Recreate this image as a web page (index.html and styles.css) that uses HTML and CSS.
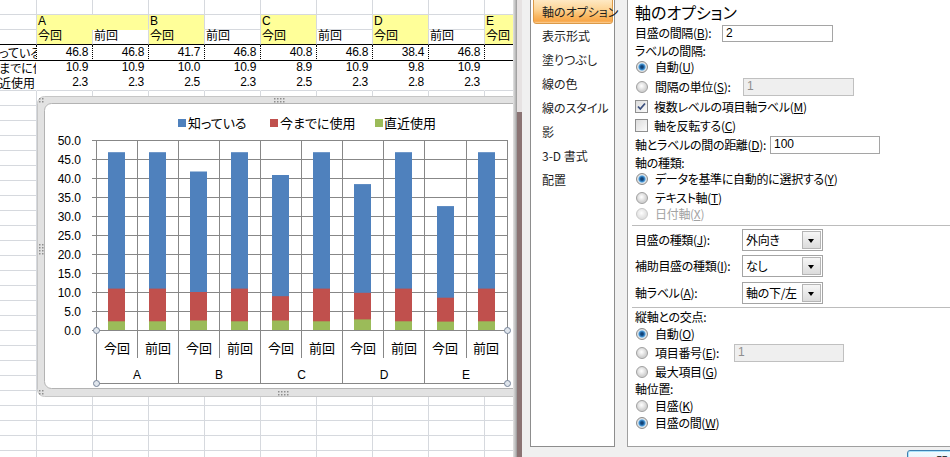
FILE: index.html
```html
<!DOCTYPE html>
<html lang="ja">
<head>
<meta charset="utf-8">
<title>軸の書式設定</title>
<link rel="stylesheet" href="styles.css">
</head>
<body>
<div class="sheet">
  <div class="grid">
    <!-- row 1 -->
    <div class="c"></div><div class="c"></div><div class="c"></div><div class="c"></div><div class="c"></div>
    <div class="c"></div><div class="c"></div><div class="c"></div><div class="c"></div><div class="c"></div>
    <!-- row 2 -->
    <div class="c"></div>
    <div class="c y span2 ny">A</div>
    <div class="c y ny">B</div><div class="c"></div>
    <div class="c y ny">C</div><div class="c"></div>
    <div class="c y ny">D</div><div class="c"></div>
    <div class="c y ny">E</div>
    <!-- row 3 -->
    <div class="c hb"></div>
    <div class="c y hb">今回</div><div class="c hb">前回</div>
    <div class="c y hb">今回</div><div class="c hb">前回</div>
    <div class="c y hb">今回</div><div class="c hb">前回</div>
    <div class="c y hb">今回</div><div class="c hb">前回</div>
    <div class="c y hb">今回</div>
    <!-- row 4 -->
    <div class="c lab dot"><span class="lt">知っている</span></div>
    <div class="c num dot">46.8</div><div class="c num dot">46.8</div>
    <div class="c num dot">41.7</div><div class="c num dot">46.8</div>
    <div class="c num dot">40.8</div><div class="c num dot">46.8</div>
    <div class="c num dot">38.4</div><div class="c num dot">46.8</div>
    <div class="c num dot">32.6</div>
    <!-- row 5 -->
    <div class="c lab pl"><span class="lt">今までに使用</span></div>
    <div class="c num pl">10.9</div><div class="c num pl">10.9</div>
    <div class="c num pl">10.0</div><div class="c num pl">10.9</div>
    <div class="c num pl">8.9</div><div class="c num pl">10.9</div>
    <div class="c num pl">9.8</div><div class="c num pl">10.9</div>
    <div class="c num pl">8.5</div>
    <!-- row 6 -->
    <div class="c lab pl gb"><span class="lt">直近使用</span></div>
    <div class="c num pl gb">2.3</div><div class="c num pl gb">2.3</div>
    <div class="c num pl gb">2.5</div><div class="c num pl gb">2.3</div>
    <div class="c num pl gb">2.5</div><div class="c num pl gb">2.3</div>
    <div class="c num pl gb">2.8</div><div class="c num pl gb">2.3</div>
    <div class="c num pl gb">2.2</div>
    <!-- blank rows -->
    <div class="f"></div><div class="f"></div><div class="f"></div><div class="f"></div><div class="f"></div>
    <div class="f"></div><div class="f"></div><div class="f"></div><div class="f"></div><div class="f"></div>
  </div>

  <div class="chart">
    <svg width="490" height="302" viewBox="0 0 490 302" xmlns="http://www.w3.org/2000/svg">
      <!-- selection frame -->
      <rect x="0.5" y="0.5" width="489" height="300" rx="7" fill="#e2e2e2" stroke="#c6c6c6"/>
      <rect x="7.5" y="7.5" width="476" height="285" rx="7" fill="#ffffff" stroke="#b3b3b3"/>
      <g fill="#8e8e8e">
        <rect x="2" y="2" width="1.5" height="1.5"/><rect x="5" y="2" width="1.5" height="1.5"/>
        <rect x="2" y="5" width="1.5" height="1.5"/><rect x="5" y="5" width="1.5" height="1.5"/>
        <rect x="2" y="294" width="1.5" height="1.5"/><rect x="5" y="294" width="1.5" height="1.5"/>
        <rect x="2" y="297" width="1.5" height="1.5"/><rect x="5" y="297" width="1.5" height="1.5"/>
        <rect x="2" y="148" width="1.5" height="1.5"/><rect x="5" y="148" width="1.5" height="1.5"/>
        <rect x="2" y="151" width="1.5" height="1.5"/><rect x="5" y="151" width="1.5" height="1.5"/>
        <rect x="2" y="154" width="1.5" height="1.5"/><rect x="5" y="154" width="1.5" height="1.5"/>
        <rect x="2" y="157" width="1.5" height="1.5"/><rect x="5" y="157" width="1.5" height="1.5"/>
        <rect x="237" y="2" width="1.5" height="1.5"/><rect x="240" y="2" width="1.5" height="1.5"/>
        <rect x="243" y="2" width="1.5" height="1.5"/><rect x="246" y="2" width="1.5" height="1.5"/>
        <rect x="237" y="5" width="1.5" height="1.5"/><rect x="240" y="5" width="1.5" height="1.5"/>
        <rect x="243" y="5" width="1.5" height="1.5"/><rect x="246" y="5" width="1.5" height="1.5"/>
        <rect x="241" y="295" width="1.5" height="1.5"/><rect x="244" y="295" width="1.5" height="1.5"/>
        <rect x="247" y="295" width="1.5" height="1.5"/><rect x="250" y="295" width="1.5" height="1.5"/>
        <rect x="241" y="298" width="1.5" height="1.5"/><rect x="244" y="298" width="1.5" height="1.5"/>
        <rect x="247" y="298" width="1.5" height="1.5"/><rect x="250" y="298" width="1.5" height="1.5"/>
      </g>

      <!-- legend -->
      <rect x="141" y="23" width="8" height="8" fill="#4f81bd"/>
      <text class="leg" x="151" y="26">知っている</text>
      <rect x="233" y="23" width="8" height="8" fill="#c0504d"/>
      <text class="leg" x="243" y="26">今までに使用</text>
      <rect x="338" y="23" width="8" height="8" fill="#9bbb59"/>
      <text class="leg" x="347" y="26">直近使用</text>

      <!-- gridlines -->
      <path fill="none" stroke="#878787" stroke-width="1"
        d="M55 44.5H471M55 63.5H471M55 82.5H471M55 101.5H471M55 120.5H471M55 139.5H471M55 158.5H471M55 177.5H471M55 196.5H471M55 215.5H471M55 234.5H471
           M59.5 44V288M100.5 44V262M141.5 44V288M182.5 44V262M223.5 44V288M264.5 44V262M305.5 44V288M346.5 44V262M387.5 44V288M429.5 44V262M470.5 44V288
           M59 287.5H471"/>

      <!-- bars -->
      <g fill="#4f81bd">
        <rect x="71" y="56.2" width="17" height="177.8"/>
        <rect x="112" y="56.2" width="17" height="177.8"/>
        <rect x="153" y="75.5" width="17" height="158.5"/>
        <rect x="194" y="56.2" width="17" height="177.8"/>
        <rect x="235" y="79" width="17" height="155"/>
        <rect x="276" y="56.2" width="17" height="177.8"/>
        <rect x="317" y="88.1" width="17" height="145.9"/>
        <rect x="358" y="56.2" width="17" height="177.8"/>
        <rect x="400" y="110.1" width="17" height="123.9"/>
        <rect x="441" y="56.2" width="17" height="177.8"/>
      </g>
      <g fill="#c0504d">
        <rect x="71" y="192.6" width="17" height="41.4"/>
        <rect x="112" y="192.6" width="17" height="41.4"/>
        <rect x="153" y="196" width="17" height="38"/>
        <rect x="194" y="192.6" width="17" height="41.4"/>
        <rect x="235" y="200.2" width="17" height="33.8"/>
        <rect x="276" y="192.6" width="17" height="41.4"/>
        <rect x="317" y="196.8" width="17" height="37.2"/>
        <rect x="358" y="192.6" width="17" height="41.4"/>
        <rect x="400" y="201.7" width="17" height="32.3"/>
        <rect x="441" y="192.6" width="17" height="41.4"/>
      </g>
      <g fill="#9bbb59">
        <rect x="71" y="225.3" width="17" height="8.7"/>
        <rect x="112" y="225.3" width="17" height="8.7"/>
        <rect x="153" y="224.5" width="17" height="9.5"/>
        <rect x="194" y="225.3" width="17" height="8.7"/>
        <rect x="235" y="224.5" width="17" height="9.5"/>
        <rect x="276" y="225.3" width="17" height="8.7"/>
        <rect x="317" y="223.4" width="17" height="10.6"/>
        <rect x="358" y="225.3" width="17" height="8.7"/>
        <rect x="400" y="225.6" width="17" height="8.4"/>
        <rect x="441" y="225.3" width="17" height="8.7"/>
      </g>

      <!-- value axis labels -->
      <g class="ylab">
        <text x="44" y="44.5">50.0</text>
        <text x="44" y="63.5">45.0</text>
        <text x="44" y="82.5">40.0</text>
        <text x="44" y="101.5">35.0</text>
        <text x="44" y="120.5">30.0</text>
        <text x="44" y="139.5">25.0</text>
        <text x="44" y="158.5">20.0</text>
        <text x="44" y="177.5">15.0</text>
        <text x="44" y="196.5">10.0</text>
        <text x="44" y="215.5">5.0</text>
        <text x="44" y="234.5">0.0</text>
      </g>

      <!-- category labels -->
      <g class="cat">
        <text x="80" y="251">今回</text>
        <text x="121" y="251">前回</text>
        <text x="162" y="251">今回</text>
        <text x="203" y="251">前回</text>
        <text x="244" y="251">今回</text>
        <text x="285" y="251">前回</text>
        <text x="326" y="251">今回</text>
        <text x="367" y="251">前回</text>
        <text x="408" y="251">今回</text>
        <text x="449" y="251">前回</text>
      </g>
      <g class="grp">
        <text x="100" y="279">A</text>
        <text x="182" y="279">B</text>
        <text x="264.5" y="279">C</text>
        <text x="347" y="279">D</text>
        <text x="429" y="279">E</text>
      </g>

      <!-- axis selection handles -->
      <g fill="#dfe5ec" stroke="#76849a" stroke-width="1">
        <circle cx="59.5" cy="234.5" r="3"/>
        <circle cx="470.5" cy="234.5" r="3"/>
        <circle cx="59.5" cy="287.5" r="3"/>
        <circle cx="470.5" cy="287.5" r="3"/>
      </g>
    </svg>
  </div>
</div>
<div class="edge"></div>
<div class="bar"></div>

<div class="dialog">
  <div class="dlg-main">
    <ul class="nav">
      <li class="sel">軸のオプション</li>
      <li>表示形式</li>
      <li>塗りつぶし</li>
      <li>線の色</li>
      <li>線のスタイル</li>
      <li>影</li>
      <li>3-D 書式</li>
      <li>配置</li>
    </ul>
    <div class="content">
      <div class="title">軸のオプション</div>

      <div class="row h22"><span class="lbl w87">目盛の間隔(<u>B</u>):</span><span class="field fw111 fh17">2</span></div>
      <div class="row h14">ラベルの間隔:</div>
      <div class="row h18"><span class="radio on"></span><span>自動(<u>U</u>)</span></div>
      <div class="row h21"><span class="radio"></span><span class="lbl w88">間隔の単位(<u>S</u>):</span><span class="field off fw111 fh18">1</span></div>
      <div class="row h19"><span class="check"><svg width="11" height="11" viewBox="0 0 11 11"><path d="M2 5.5 L4.3 8 L9 2.5" fill="none" stroke="#3b4f7d" stroke-width="1.8"/></svg></span><span>複数レベルの項目軸ラベル(<u>M</u>)</span></div>
      <div class="row h19"><span class="check"></span><span>軸を反転する(<u>C</u>)</span></div>
      <div class="row h20"><span class="lbl w133">軸とラベルの間の距離(<u>D</u>):</span><span class="field fw110 fh18">100</span></div>
      <div class="row h15">軸の種類:</div>
      <div class="row h18"><span class="radio on"></span><span>データを基準に自動的に選択する(<u>Y</u>)</span></div>
      <div class="row h19"><span class="radio"></span><span>テキスト軸(<u>T</u>)</span></div>
      <div class="row h14 dis"><span class="radio off"></span><span>日付軸(<u>X</u>)</span></div>

      <div class="sep sep1"></div>

      <div class="row h24"><span class="lbl w107">目盛の種類(<u>J</u>):</span><span class="combo"><span class="cv">外向き</span><span class="dd"></span></span></div>
      <div class="row h24 mt2"><span class="lbl w107">補助目盛の種類(<u>I</u>):</span><span class="combo"><span class="cv">なし</span><span class="dd"></span></span></div>
      <div class="row h24 mt3"><span class="lbl w107">軸ラベル(<u>A</u>):</span><span class="combo"><span class="cv">軸の下/左</span><span class="dd"></span></span></div>

      <div class="sep sep2"></div>

      <div class="row h16">縦軸との交点:</div>
      <div class="row h18"><span class="radio on"></span><span>自動(<u>O</u>)</span></div>
      <div class="row h20"><span class="radio"></span><span class="lbl w79">項目番号(<u>E</u>):</span><span class="field off fw110 fh18">1</span></div>
      <div class="row h18"><span class="radio"></span><span>最大項目(<u>G</u>)</span></div>
      <div class="row h16">軸位置:</div>
      <div class="row h17"><span class="radio"></span><span>目盛(<u>K</u>)</span></div>
      <div class="row h18"><span class="radio on"></span><span>目盛の間(<u>W</u>)</span></div>
    </div>
  </div>
  <div class="footer"><button class="btn">閉じる</button></div>
</div>
</body>
</html>
```

FILE: styles.css
```css
:root {
  --g: #d6d9de;
  --yel: #ffff99;
}

html, body {
  margin: 0;
  padding: 0;
}

body {
  width: 950px;
  height: 457px;
  overflow: hidden;
  display: flex;
  background: #f0f0f0;
  font-family: "Noto Sans CJK JP", sans-serif;
  font-feature-settings: "palt";
}

/* ---------- spreadsheet ---------- */
.sheet {
  position: relative;
  width: 513px;
  height: 457px;
  flex-shrink: 0;
  overflow: hidden;
  background: #fff;
  font-family: "Liberation Sans Narrow", "Liberation Sans", "Noto Sans CJK JP", sans-serif;
  font-feature-settings: normal;
}

.grid {
  display: grid;
  grid-template-columns: 37px repeat(9, 56px);
  grid-template-rows: 15px 15px 15px 16px 15px 15px 380px;
  width: 541px;
}

.c {
  box-sizing: border-box;
  border-right: 1px solid var(--g);
  border-bottom: 1px solid var(--g);
  display: flex;
  align-items: flex-end;
  padding: 0 4px 1px 1px;
  font-size: 12px;
  line-height: 13px;
  white-space: nowrap;
  color: #000;
}

.y { background: var(--yel); }
.span2 { grid-column: span 2; }
.ny { border-bottom-color: var(--yel); }
.hb { border-bottom: 1px solid #000; }

.num {
  justify-content: flex-end;
  letter-spacing: -0.3px;
}

.dot {
  border-right: 1px dotted #000;
  border-bottom: 1px solid #000;
}

.pl {
  border-right-color: transparent;
  border-bottom-color: transparent;
}

.gb { border-bottom-color: var(--g); }

.lab {
  padding-left: 0;
  overflow: hidden;
}

.lt {
  flex-shrink: 0;
  margin-left: -13px;
  font-family: "Noto Sans CJK JP", sans-serif;
  font-feature-settings: "palt";
}

.f {
  box-sizing: border-box;
  border-right: 1px solid var(--g);
  background: repeating-linear-gradient(to bottom, transparent 0 14px, var(--g) 14px 15px);
}

/* ---------- chart ---------- */
.chart {
  position: absolute;
  left: 37px;
  top: 96px;
  width: 490px;
  height: 302px;
}

.chart svg { display: block; }

.leg {
  font-family: "Noto Sans CJK JP", sans-serif;
  font-size: 13px;
  font-feature-settings: "palt";
  dominant-baseline: central;
  fill: #000;
}

.ylab text {
  font-family: "Liberation Sans", sans-serif;
  font-size: 12px;
  text-anchor: end;
  dominant-baseline: central;
  fill: #000;
}

.cat text {
  font-family: "Noto Sans CJK JP", sans-serif;
  font-size: 13px;
  text-anchor: middle;
  dominant-baseline: central;
  fill: #000;
}

.grp text {
  font-family: "Liberation Sans", sans-serif;
  font-size: 12px;
  text-anchor: middle;
  dominant-baseline: central;
  fill: #000;
}

/* ---------- window edge ---------- */
.edge {
  width: 4px;
  flex-shrink: 0;
  background: linear-gradient(to right, #e4e4e4, #bcbcbc 60%, #979797);
}

.bar {
  width: 5px;
  flex-shrink: 0;
  background: linear-gradient(to bottom, #e6e2e2 0 112px, #8b7474 112px 100%);
}

/* ---------- dialog ---------- */
.dialog {
  width: 428px;
  flex-shrink: 0;
  display: flex;
  flex-direction: column;
  background: #f0f0f0;
  overflow: hidden;
  font-size: 12px;
  color: #000;
}

.dlg-main {
  display: flex;
  height: 447px;
  padding-left: 8px;
  gap: 12px;
}

.nav {
  list-style: none;
  margin: 0;
  padding: 0;
  width: 85px;
  box-sizing: border-box;
  flex-shrink: 0;
  background: #fff;
  border: 1px solid #8d8d8d;
  border-top: none;
}

.nav li {
  height: 24px;
  line-height: 24px;
  padding-left: 11px;
  color: #1e1e1e;
  white-space: nowrap;
}

.nav li.sel {
  box-sizing: border-box;
  height: 25px;
  line-height: 23px;
  margin: -1px 1px 0 2px;
  padding-left: 8px;
  border: 1px solid #dc9a48;
  border-radius: 0 0 3px 3px;
  background: linear-gradient(to bottom, #fee9c4 0%, #fdd597 40%, #fab862 70%, #f8a648 92%, #fbd29a 100%);
}

.content {
  flex: 1;
  background: #fff;
  border-left: 1px solid #9f9f9f;
  border-bottom: 1px solid #9f9f9f;
  padding-left: 7px;
  display: flex;
  flex-direction: column;
  white-space: nowrap;
  letter-spacing: -0.3px;
}

.title {
  height: 22px;
  line-height: 24px;
  font-size: 16px;
  flex-shrink: 0;
  letter-spacing: 0;
}

.row {
  display: flex;
  align-items: center;
  flex-shrink: 0;
  line-height: 14px;
}

.h14 { height: 14px; }
.h15 { height: 15px; }
.h16 { height: 16px; }
.h17 { height: 17px; }
.h18 { height: 18px; }
.h19 { height: 19px; }
.h20 { height: 20px; }
.h21 { height: 21px; }
.h22 { height: 22px; }
.h24 { height: 24px; }
.mt2 { margin-top: 2px; }
.mt3 { margin-top: 3px; }

.lbl { flex-shrink: 0; }
.w79 { min-width: 79px; }
.w87 { min-width: 87px; }
.w88 { min-width: 88px; }
.w107 { min-width: 107px; }
.w133 { min-width: 133px; padding-right: 2px; }

.dis { color: #a3a3a3; }

u { text-decoration: underline; text-underline-offset: 1px; }

.radio {
  box-sizing: border-box;
  width: 12px;
  height: 12px;
  margin: 0 7px 0 1px;
  flex-shrink: 0;
  border-radius: 50%;
  border: 1px solid #a0a0a0;
  background: radial-gradient(circle at 45% 40%, #ffffff 0, #eeeeee 2px, #d2d2d2 5px);
}

.radio.on {
  border-color: #8c8c8c;
  background: radial-gradient(circle at 50% 50%, #0e3560 0, #1a5590 1.6px, #4a9ad8 3px, #bcd9ef 3.8px, #e4e4e4 4.4px, #cfcfcf 6px);
}

.radio.off {
  border-color: #c9c9c9;
  background: radial-gradient(circle at 45% 40%, #ffffff 0, #f2f2f2 2px, #e2e2e2 5px);
}

.check {
  box-sizing: border-box;
  width: 13px;
  height: 13px;
  margin-right: 6px;
  flex-shrink: 0;
  border: 1px solid #8f8f8f;
  background: linear-gradient(135deg, #dcdcdc, #fbfbfb);
  display: flex;
  align-items: center;
  justify-content: center;
}

.check svg { display: block; }

.field {
  box-sizing: border-box;
  flex-shrink: 0;
  border: 1px solid #a5a5a5;
  background: #fff;
  padding-left: 3px;
  line-height: 15px;
  font-family: "Liberation Sans", "Noto Sans CJK JP", sans-serif;
  font-size: 12px;
  letter-spacing: 0;
}

.field.off {
  background: #efefef;
  border-color: #c0c0c0;
  color: #8e8e8e;
}

.fw110 { width: 110px; }
.fw111 { width: 111px; }
.fh17 { height: 17px; }
.fh18 { height: 18px; }

.combo {
  box-sizing: border-box;
  width: 81px;
  height: 22px;
  flex-shrink: 0;
  display: flex;
  align-items: stretch;
  border: 1px solid #a4a4a4;
  background: #fff;
}

.cv {
  flex: 1;
  padding-left: 3px;
  line-height: 20px;
}

.dd {
  box-sizing: border-box;
  width: 19px;
  margin: 1px;
  border: 1px solid #b5b5b5;
  background: linear-gradient(to bottom, #f6f6f6, #dcdcdc);
  position: relative;
}

.dd::after {
  content: "";
  position: absolute;
  left: 5px;
  top: 7px;
  border-left: 3.5px solid transparent;
  border-right: 3.5px solid transparent;
  border-top: 4px solid #000;
}

.sep {
  height: 1px;
  background: #bcbcbc;
  margin-left: -3px;
  flex-shrink: 0;
}

.sep1 { margin-top: 4px; margin-bottom: 2px; }
.sep2 { margin-top: 2px; margin-bottom: 1px; }

.footer {
  height: 10px;
  display: flex;
  padding-left: 385px;
}

.btn {
  flex-shrink: 0;
  margin-top: 3px;
  width: 94px;
  height: 23px;
  border: 1px solid #3c7fb1;
  border-radius: 3px;
  box-shadow: inset 0 0 0 1px #a9e3fb;
  background: linear-gradient(to bottom, #f2fafe, #d9f0fc);
  font-family: "Noto Sans CJK JP", sans-serif;
  font-size: 12px;
  padding: 0;
  color: #000;
}
```
